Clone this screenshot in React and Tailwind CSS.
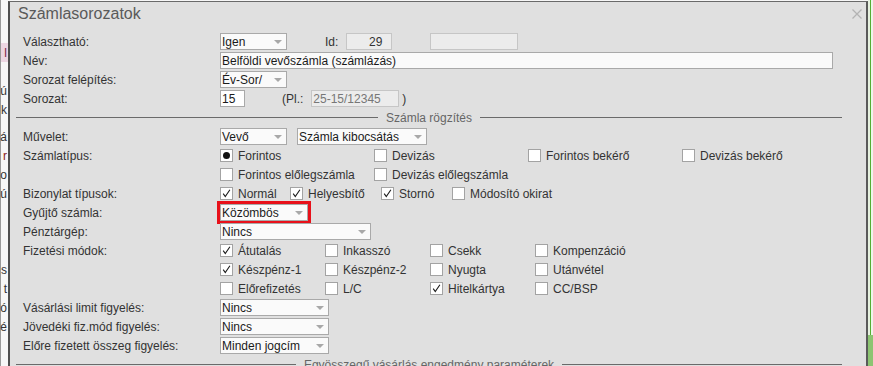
import React from "react";

const Select = ({ value, width }) => (
  <div
    className="flex h-[17px] items-center justify-between border border-[#a9a9a9] bg-[#fafafa] pl-[1px] text-[#1a1a1a]"
    style={{ width }}
  >
    <span className="leading-none">{value}</span>
    <span className="mr-[4px] h-0 w-0 border-x-[4px] border-t-[4px] border-x-transparent border-t-[#a8a8a8]" />
  </div>
);

const Box = ({ checked, radio }) => (
  <span className="flex h-[13px] w-[13px] shrink-0 items-center justify-center border border-[#a3a3a3] bg-white">
    {radio && <span className="h-[7px] w-[7px] rounded-full bg-[#111]" />}
    {checked && (
      <svg width="9" height="9" viewBox="0 0 9 9">
        <path d="M1.2 4.6 L3.3 7.6 L7.9 0.8" fill="none" stroke="#1a1a1a" strokeWidth="1.1" />
      </svg>
    )}
  </span>
);

const Opt = ({ label, checked, radio, w }) => (
  <div className="flex items-center" style={w ? { width: w } : undefined}>
    <Box checked={checked} radio={radio} />
    <span className="ml-[5px] whitespace-nowrap">{label}</span>
  </div>
);

const Row = ({ label, children }) => (
  <div className="flex h-[19px] items-center pl-[7px]">
    <span className="w-[197px] shrink-0 whitespace-nowrap">{label}</span>
    {children}
  </div>
);

const Separator = ({ title }) => (
  <div className="flex h-[19px] items-center">
    <div className="h-px flex-1 bg-[#6a6a6a]" />
    <span className="px-2 text-[#666]">{title}</span>
    <div className="h-px flex-1 bg-[#6a6a6a]" />
  </div>
);

// scraps of the page behind the dialog
const leftBits = [
  { t: "l", c: "text-[#7a1c48]", bg: "bg-[#ecd6e2]" },
  { t: "" },
  { t: "ú" },
  { t: "k" },
];
const leftBits2 = [
  { t: "á" },
  { t: "r", c: "text-[#8a1a1a]" },
  { t: "o" },
  { t: "ú" },
  { t: "" },
  { t: "" },
  { t: "" },
  { t: "s" },
  { t: "t" },
  { t: "ó" },
  { t: "é" },
];

const LeftLine = ({ t, c, bg }) => (
  <div className={`flex h-[19px] items-center justify-end pr-px ${c || "text-[#333]"} ${bg || ""}`}>
    {t}
  </div>
);

export default function App() {
  return (
    <div className="flex h-[366px] w-[873px] overflow-hidden bg-[#f7f7f7] font-['Liberation_Sans',Arial,sans-serif] text-[12px] text-[#333]">
      <div className="w-[8px] shrink-0 border-l border-[#9a9a9a]">
        <div className="mt-[43px]">
          {leftBits.map((b, i) => (
            <LeftLine key={i} {...b} />
          ))}
        </div>
        <div className="mt-[8px]">
          {leftBits2.map((b, i) => (
            <LeftLine key={i} {...b} />
          ))}
        </div>
      </div>

      <div className="mt-px w-[860px] shrink-0 border-x-2 border-t border-l-[#4f4f4f] border-r-[#5a5a5a] border-t-[#6a6a6a] bg-[#e0e0e0]">
        <div className="flex h-[30px] items-start justify-between pl-[8px] pr-[4px]">
          <span className="pt-[3px] text-[16px] leading-[18px] text-[#5a5a5a]">Számlasorozatok</span>
          <svg className="mt-[7px]" width="10" height="10" viewBox="0 0 10 10">
            <path d="M0.5 0.5 L9.5 9.5 M9.5 0.5 L0.5 9.5" stroke="#b3b3b3" strokeWidth="1.3" />
          </svg>
        </div>

        <div className="w-[832px] pl-[6px]">
          <Row label="Választható:">
            <Select value="Igen" width={67} />
            <span className="ml-[38px]">Id:</span>
            <div className="ml-[8px] flex h-[17px] w-[46px] items-center justify-end border border-[#c6c6c6] bg-[#ececec] pr-[9px] text-[#333]">
              29
            </div>
            <div className="ml-[38px] h-[17px] w-[88px] border border-[#c6c6c6] bg-[#ececec]" />
          </Row>
          <Row label="Név:">
            <div className="flex h-[17px] w-[613px] items-center border border-[#a9a9a9] bg-[#fafafa] pl-[1px] text-[#1a1a1a]">
              Belföldi vevőszámla (számlázás)
            </div>
          </Row>
          <Row label="Sorozat felépítés:">
            <Select value="Év-Sor/" width={67} />
          </Row>
          <Row label="Sorozat:">
            <div className="flex h-[17px] w-[25px] items-center border border-[#a9a9a9] bg-white pl-[1px] text-[#1a1a1a]">
              15
            </div>
            <span className="ml-[37px]">(Pl.:</span>
            <div className="ml-[8px] flex h-[17px] w-[88px] items-center border border-[#c6c6c6] bg-[#ececec] pl-[1px] text-[#777]">
              25-15/12345
            </div>
            <span className="ml-[3px]">)</span>
          </Row>

          <Separator title="Számla rögzítés" />

          <Row label="Művelet:">
            <Select value="Vevő" width={67} />
            <div className="ml-[10px]">
              <Select value="Számla kibocsátás" width={130} />
            </div>
          </Row>
          <Row label="Számlatípus:">
            <Opt label="Forintos" radio w={154} />
            <Opt label="Devizás" w={154} />
            <Opt label="Forintos bekérő" w={154} />
            <Opt label="Devizás bekérő" />
          </Row>
          <Row label="">
            <Opt label="Forintos előlegszámla" w={154} />
            <Opt label="Devizás előlegszámla" />
          </Row>
          <Row label="Bizonylat típusok:">
            <Opt label="Normál" checked w={70} />
            <Opt label="Helyesbítő" checked w={91} />
            <Opt label="Stornó" checked w={71} />
            <Opt label="Módosító okirat" />
          </Row>
          <Row label="Gyűjtő számla:">
            <div className="outline-[3px] outline-solid outline-[#e8111a]">
              <Select value="Közömbös" width={88} />
            </div>
          </Row>
          <Row label="Pénztárgép:">
            <Select value="Nincs" width={151} />
          </Row>
          <Row label="Fizetési módok:">
            <Opt label="Átutalás" checked w={105} />
            <Opt label="Inkasszó" w={105} />
            <Opt label="Csekk" w={105} />
            <Opt label="Kompenzáció" />
          </Row>
          <Row label="">
            <Opt label="Készpénz-1" checked w={105} />
            <Opt label="Készpénz-2" w={105} />
            <Opt label="Nyugta" w={105} />
            <Opt label="Utánvétel" />
          </Row>
          <Row label="">
            <Opt label="Előrefizetés" w={105} />
            <Opt label="L/C" w={105} />
            <Opt label="Hitelkártya" checked w={105} />
            <Opt label="CC/BSP" />
          </Row>
          <Row label="Vásárlási limit figyelés:">
            <Select value="Nincs" width={109} />
          </Row>
          <Row label="Jövedéki fiz.mód figyelés:">
            <Select value="Nincs" width={109} />
          </Row>
          <Row label="Előre fizetett összeg figyelés:">
            <Select value="Minden jogcím" width={109} />
          </Row>

          <Separator title="Egyösszegű vásárlás engedmény paraméterek" />
        </div>
      </div>

      <div className="flex flex-1 flex-col">
        <div className="flex flex-1">
          <div className="w-[2px] bg-[#e6f1df]" />
          <div className="w-px bg-[#56ad34]" />
          <div className="flex-1 bg-[#eef6ea]" />
        </div>
        <div className="h-[31px] bg-[#8cc472]" />
      </div>
    </div>
  );
}
